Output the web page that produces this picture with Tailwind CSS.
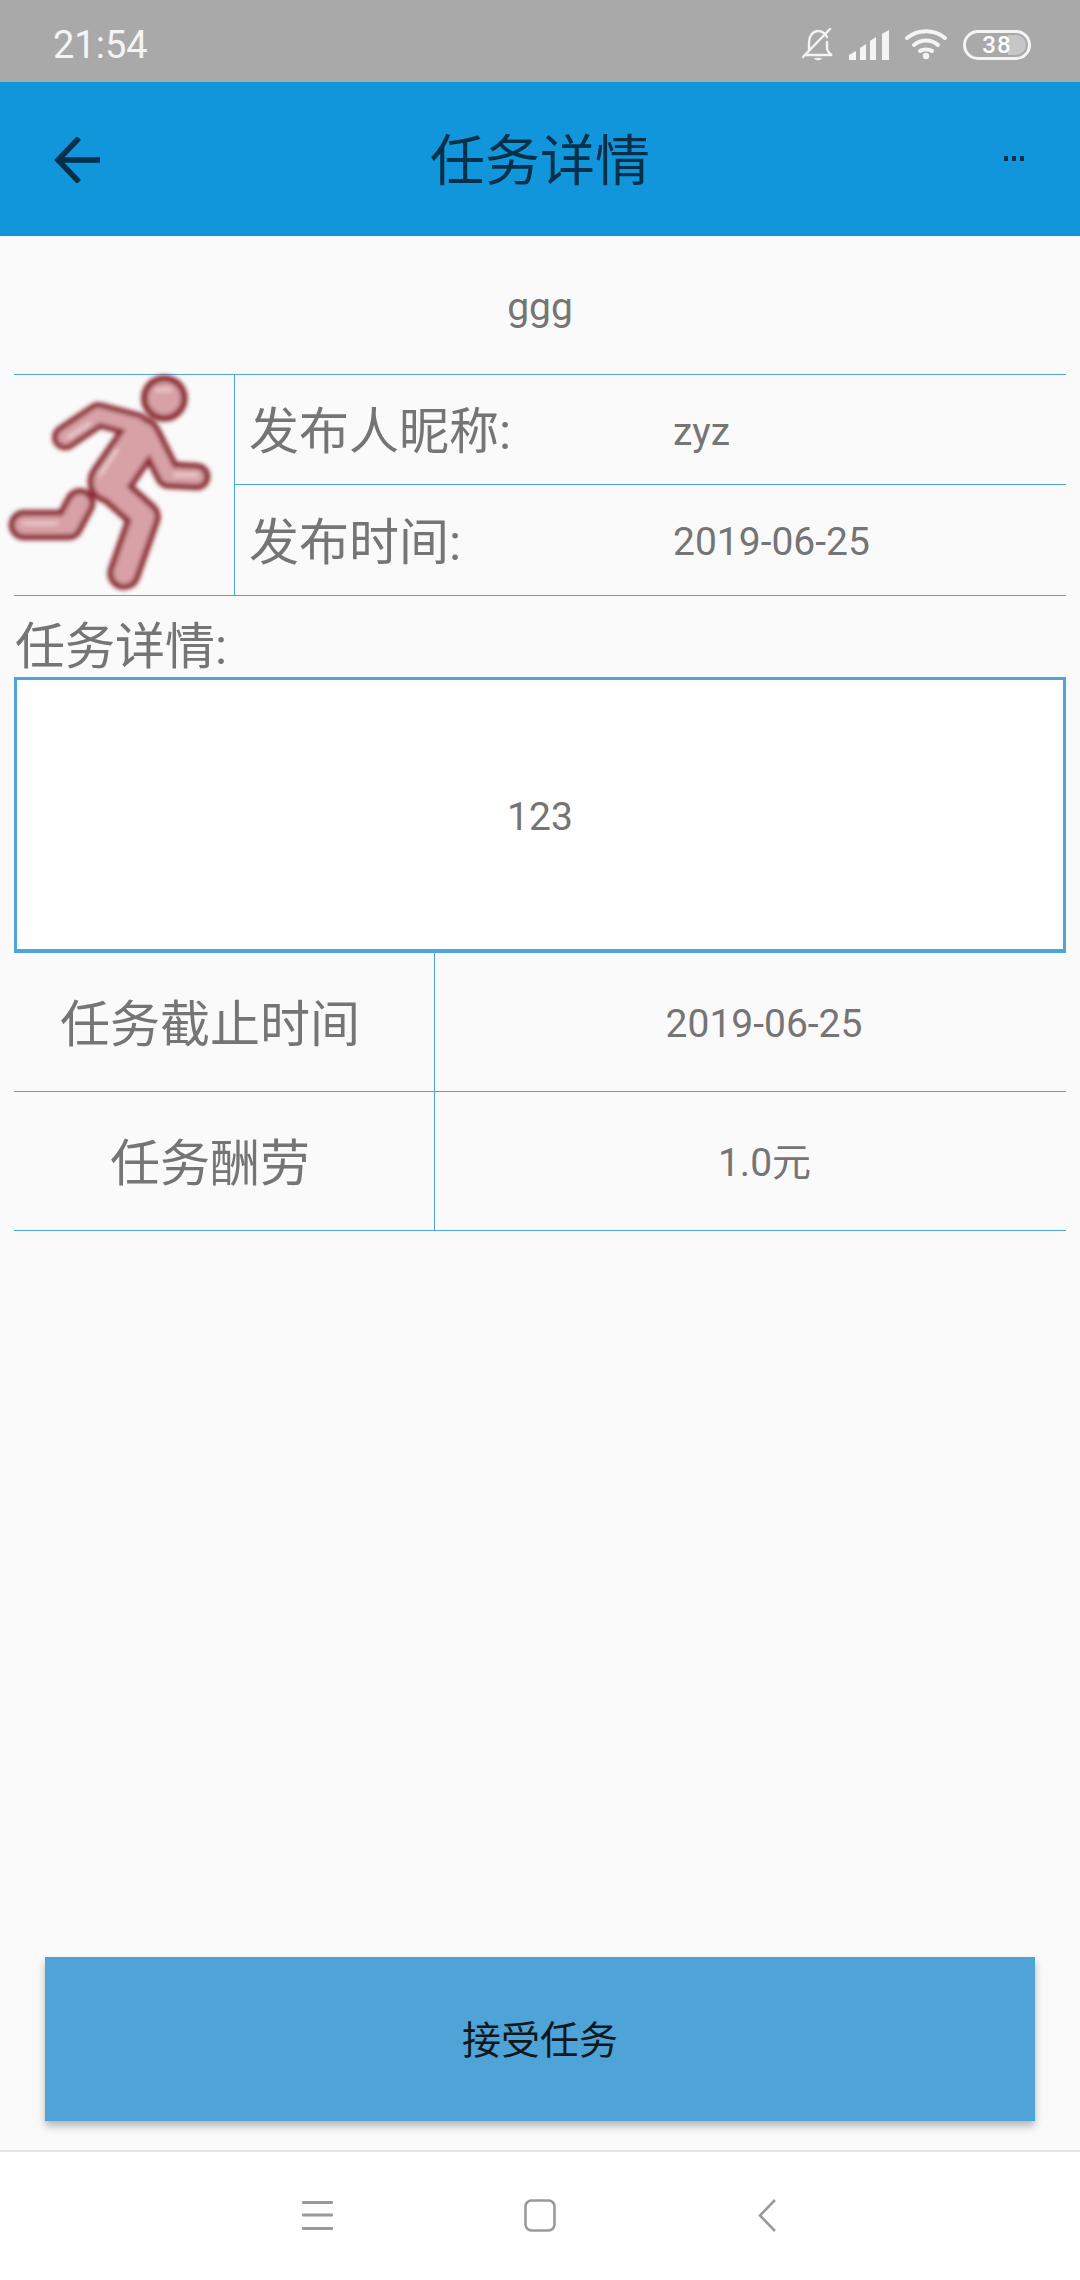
<!DOCTYPE html>
<html lang="zh">
<head>
<meta charset="UTF-8">
<script src="https://cdn.jsdelivr.net/npm/@tailwindcss/browser@4"></script>
<title>任务详情</title>
</head>
<body class="bg-[#fafafa] font-['Roboto','Noto_Sans_CJK_SC',sans-serif] text-[#757575]">
<div class="w-[1080px] h-[2280px] flex flex-col overflow-hidden">

  <!-- status bar -->
  <div class="h-[82px] bg-[#a9a9a9] flex items-center pl-[53px] text-[#f4f4f4] shrink-0">
    <span class="text-[38px] leading-none mt-[8px]">21:54</span>
    <div class="ml-auto flex items-center mr-[49px] mt-[7px]">
      <svg class="w-[32px] h-[34px] mr-[15px]" viewBox="0 0 32 34" fill="none" stroke="#f4f4f4" stroke-width="2.4" stroke-linecap="round">
        <path d="M7 22V14C7 8 11 3 16 3C20 3 23 5 25 9M25 14V20C25 23 28 26 30 27H3"/>
        <path d="M1 29L28 1"/>
        <path d="M12 30H20C19 33 13 33 12 30Z" fill="#f4f4f4" stroke="none"/>
      </svg>
      <svg class="w-[41px] h-[30px] mr-[15px]" viewBox="0 0 41 30" fill="#f4f4f4">
        <path d="M0 30V25L7 21V30Z"/>
        <path d="M11 30V18L17 14V30Z"/>
        <path d="M21 30V11L27 7V30Z"/>
        <path d="M33 30V4L40 0V30Z"/>
      </svg>
      <svg class="w-[42px] h-[31px] mr-[16px]" viewBox="0 0 42 31" fill="none" stroke="#f4f4f4" stroke-width="4" stroke-linecap="round">
        <path d="M2 9C13 0 29 0 40 9"/>
        <path d="M9 16C16 10 26 10 33 16"/>
        <path d="M15 22C18 20 24 20 27 22"/>
        <circle cx="21" cy="27" r="3.2" fill="#f4f4f4" stroke="none"/>
      </svg>
      <div class="relative w-[68px] h-[30px] rounded-full border-[3px] border-[#f4f4f4] flex items-center justify-center overflow-hidden">
        <div class="absolute right-[2px] top-[2px] bottom-[2px] w-[18px] rounded-r-full bg-[#c6c6c6]"></div>
        <span class="relative text-[24px] leading-none font-medium tracking-[1px] text-white">38</span>
      </div>
    </div>
  </div>

  <!-- toolbar -->
  <div class="h-[154px] bg-[#1296db] flex items-center justify-between relative shrink-0 text-[#063049]">
    <svg class="w-[46px] h-[46px] ml-[54px] mt-[2px]" viewBox="0 0 46 46" fill="none" stroke="#063049" stroke-width="5.5">
      <path d="M25 1L4 23L25 45"/>
      <path d="M3 23H46"/>
    </svg>
    <h1 class="absolute inset-x-0 text-center text-[55px] leading-none pt-[5px]">任务详情</h1>
    <svg class="w-[20px] h-[6px] mr-[56px]" viewBox="0 0 20 6" fill="#063049">
      <rect x="0" y="0" width="4" height="5"/><rect x="8" y="0" width="4" height="5"/><rect x="16" y="0" width="4" height="5"/>
    </svg>
  </div>

  <!-- content -->
  <div class="flex-1 flex flex-col px-[14px]">
    <div class="h-[139px] flex items-center justify-center text-[39px] border-b border-[#4ea5d9] shrink-0 pt-[5px]">ggg</div>

    <div class="h-[221px] flex border-b border-[#4ea5d9] shrink-0">
      <div class="w-[221px] border-r border-[#4ea5d9] relative">
        <svg class="absolute left-[-14px] top-[-15px] w-[260px] h-[240px]" viewBox="0 0 780 720" fill="none" stroke-linecap="round" stroke-linejoin="round">
          <defs><filter id="soft" filterUnits="userSpaceOnUse" x="0" y="0" width="780" height="720"><feGaussianBlur stdDeviation="6"/></filter></defs>
          <g filter="url(#soft)">
            <g stroke="#8e2d36">
              <path d="M72 495H205L240 430" stroke-width="92"/>
              <circle cx="493" cy="115" r="60" fill="#d7a1a5" stroke-width="20"/>
              <path d="M195 232L295 165L410 195" stroke-width="78"/>
              <path d="M420 235L330 365" stroke-width="135"/>
              <path d="M450 235L505 345L590 350" stroke-width="82"/>
              <path d="M320 370L432 470L372 640" stroke-width="100"/>
            </g>
            <g stroke="#d7a1a5">
              <path d="M72 495H205L240 430" stroke-width="56"/>
              <path d="M195 232L295 165L410 195" stroke-width="44"/>
              <path d="M420 235L330 365" stroke-width="100"/>
              <path d="M450 235L505 345L590 350" stroke-width="46"/>
              <path d="M320 370L432 470L372 640" stroke-width="64"/>
            </g>
            <g stroke="#f3dfe0" stroke-width="10" opacity="0.75">
              <path d="M470 92L512 88"/>
              <path d="M70 490H170"/>
              <path d="M205 232L270 190"/>
              <path d="M300 345L350 270"/>
              <path d="M525 345H590"/>
            </g>
          </g>
        </svg>
      </div>
      <div class="flex-1 flex flex-col">
        <div class="h-[110px] flex items-center border-b border-[#4ea5d9] pt-[5px]">
          <span class="w-[438px] shrink-0 pl-[14px] text-[50px] leading-none">发布人昵称:</span>
          <span class="text-[39px] leading-none">zyz</span>
        </div>
        <div class="flex-1 flex items-center pt-[5px]">
          <span class="w-[438px] shrink-0 pl-[14px] text-[50px] leading-none">发布时间:</span>
          <span class="text-[39px] leading-none">2019-06-25</span>
        </div>
      </div>
    </div>

    <div class="h-[81px] flex items-end pl-[1px] text-[50px] leading-[60px] shrink-0">任务详情:</div>

    <div class="h-[276px] bg-white border-[3px] border-b-4 border-[#4ea5d9] flex items-center justify-center text-[39px] shrink-0 pt-[6px]">123</div>

    <div class="h-[139px] flex border-b border-[#4ea5d9] shrink-0">
      <div class="w-[421px] border-r border-[#4ea5d9] flex items-center justify-center text-[50px] leading-none pr-[28px] pt-[5px]">任务截止时间</div>
      <div class="flex-1 flex items-center justify-center text-[39px] leading-none pl-[27px] pt-[5px]">2019-06-25</div>
    </div>
    <div class="h-[139px] flex border-b border-[#4ea5d9] shrink-0">
      <div class="w-[421px] border-r border-[#4ea5d9] flex items-center justify-center text-[50px] leading-none pr-[28px] pt-[5px]">任务酬劳</div>
      <div class="flex-1 flex items-center justify-center text-[39px] leading-none pl-[28px] pt-[5px]">1.0元</div>
    </div>

    <div class="mt-auto mb-[29px] mx-[31px] h-[164px] bg-[#4fa4d7] shadow-[0_5px_8px_rgba(0,0,0,0.28)] flex items-center justify-center text-[39px] text-[#10181d] pt-[4px]">接受任务</div>
  </div>

  <!-- navigation bar -->
  <div class="h-[130px] bg-white border-t-2 border-[#e6e6e6] flex items-start shrink-0 relative">
    <svg class="absolute left-[302px] top-[49px] w-[31px] h-[29px]" viewBox="0 0 31 29" fill="#9a9a9a">
      <rect x="0" y="0" width="31" height="3" rx="1"/><rect x="0" y="12.5" width="31" height="3" rx="1"/><rect x="0" y="26" width="31" height="3" rx="1"/>
    </svg>
    <svg class="absolute left-[524px] top-[47px] w-[32px] h-[33px]" viewBox="0 0 32 33" fill="none" stroke="#9a9a9a" stroke-width="2.6">
      <rect x="1.5" y="1.5" width="29" height="30" rx="6"/>
    </svg>
    <svg class="absolute left-[757px] top-[47px] w-[20px] h-[33px]" viewBox="0 0 20 33" fill="none" stroke="#9a9a9a" stroke-width="2.6">
      <path d="M18 1L3 16.5L18 32"/>
    </svg>
  </div>
</div>
</body>
</html>
